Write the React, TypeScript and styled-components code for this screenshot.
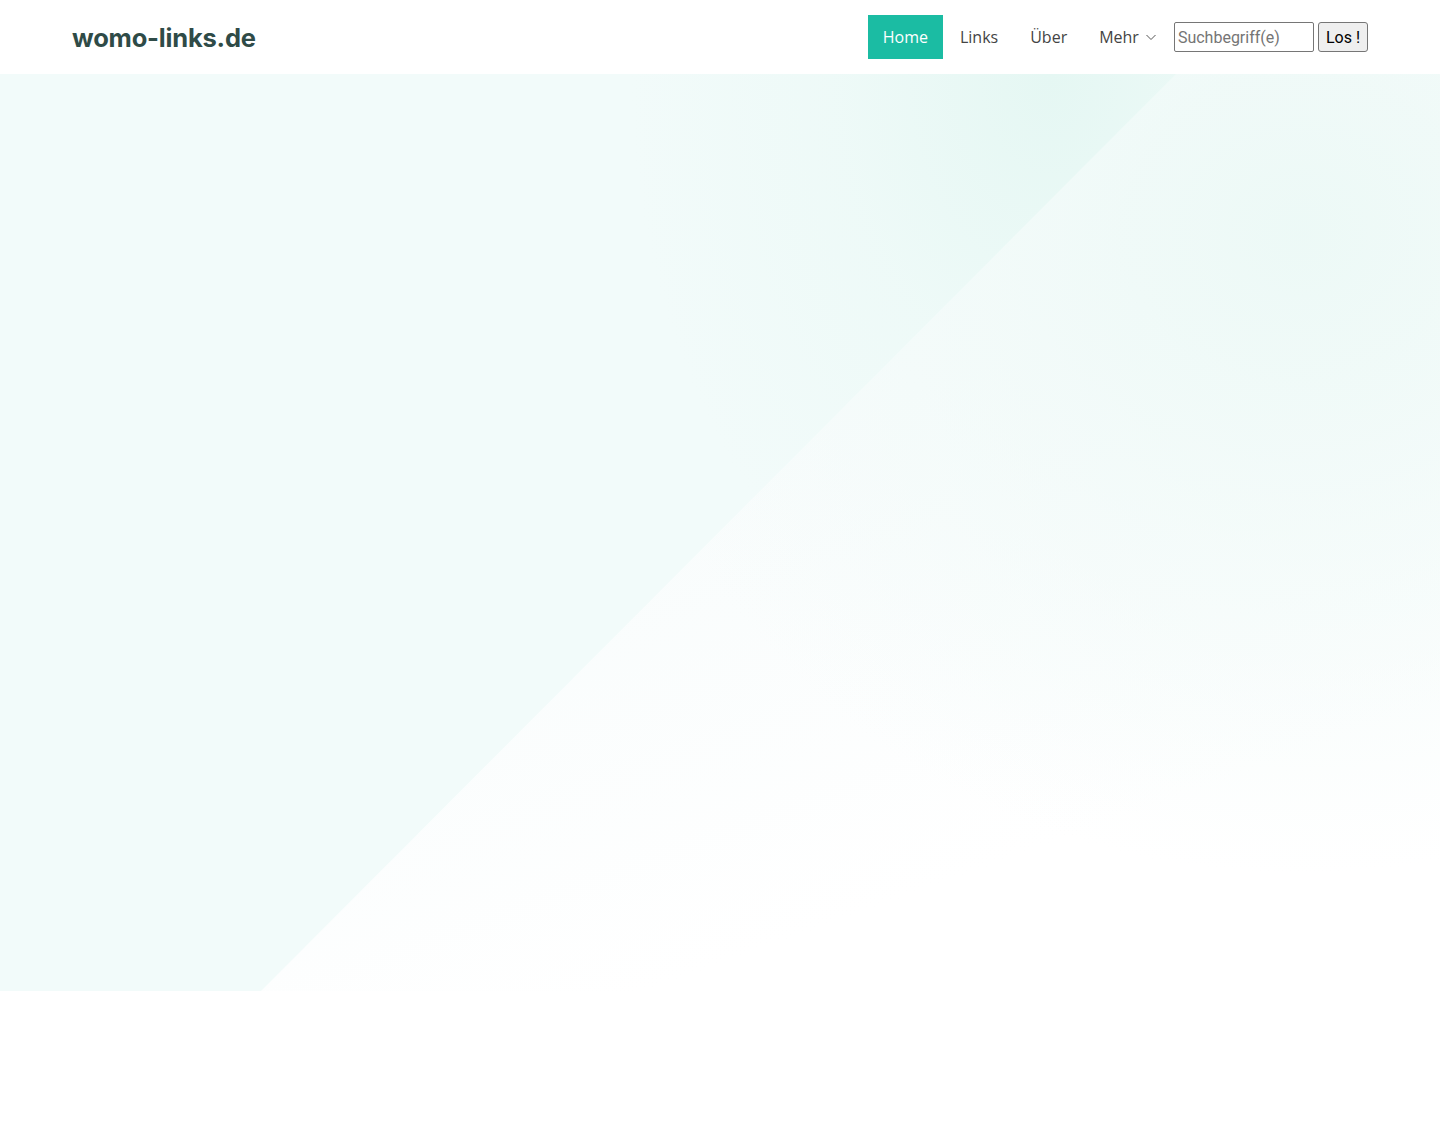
import React from "react";
import styled, { createGlobalStyle } from "styled-components";

const GlobalStyle = createGlobalStyle`
  html, body {
    margin: 0;
    padding: 0;
    background: #ffffff;
    font-family: "Open Sans", "Liberation Sans", sans-serif;
  }
  * { box-sizing: border-box; }
`;

const Page = styled.div`
  min-height: 1123px;
  background: #ffffff;
`;

const Header = styled.header`
  height: 74px;
  display: flex;
  align-items: center;
  justify-content: space-between;
  padding: 0 72px;
  background: #ffffff;
`;

const Logo = styled.a`
  font-family: Inter, "Liberation Sans", sans-serif;
  font-size: 25.5px;
  font-weight: 700;
  color: #2f4b47;
  text-decoration: none;
  letter-spacing: -0.2px;
`;

const Nav = styled.nav`
  display: flex;
  align-items: center;
  gap: 2px;
`;

const NavItem = styled.a<{ $active?: boolean }>`
  display: flex;
  align-items: center;
  gap: 6px;
  height: 44px;
  padding: 0 15px;
  font-size: 16px;
  color: ${(p) => (p.$active ? "#ffffff" : "#444444")};
  background: ${(p) => (p.$active ? "#1bbca3" : "transparent")};
  text-decoration: none;
  cursor: pointer;
`;

const Search = styled.form`
  display: flex;
  align-items: center;
  gap: 4px;
`;

const SearchInput = styled.input`
  width: 140px;
  height: 30px;
  padding: 1px 3px;
  font-family: Roboto, "Liberation Sans", sans-serif;
  font-size: 16px;
  border: 1px solid #767676;
  border-radius: 2px;
  color: #222;
  &::placeholder { color: #757575; }
`;

const SearchButton = styled.button`
  height: 30px;
  padding: 0 7px;
  font-family: Roboto, "Liberation Sans", sans-serif;
  font-size: 16px;
  color: #000;
  background: #efefef;
  border: 1px solid #767676;
  border-radius: 3px;
`;

const Hero = styled.section`
  position: relative;
  height: 917px;
  overflow: hidden;
  background:
    radial-gradient(ellipse 700px 640px at 1300px 160px, rgba(236, 249, 246, 0.95) 0%, rgba(240, 250, 248, 0.75) 40%, rgba(255, 255, 255, 0) 100%),
    linear-gradient(160deg, #f4fbfb 0%, #f8fcfc 45%, #ffffff 80%);

  &::before {
    content: "";
    position: absolute;
    inset: 0;
    clip-path: polygon(0 0, 1176px 0, 261px 100%, 0 100%);
    background:
      radial-gradient(ellipse 420px 600px at 1050px 0px, #e5f7f3 0%, rgba(235, 249, 246, 0.6) 50%, rgba(242, 251, 250, 0) 100%),
      #f2fbfa;
  }
`;

const Chevron = () => (
  <svg width="12" height="12" viewBox="0 0 12 12" fill="none">
    <path d="M1.5 4l4.5 4.5L10.5 4" stroke="#555" strokeWidth="1" />
  </svg>
);

export default function App() {
  return (
    <Page>
      <GlobalStyle />
      <Header>
        <Logo href="#">womo-links.de</Logo>
        <Nav>
          <NavItem $active>Home</NavItem>
          <NavItem>Links</NavItem>
          <NavItem>Über</NavItem>
          <NavItem>
            Mehr <Chevron />
          </NavItem>
          <Search onSubmit={(e) => e.preventDefault()}>
            <SearchInput placeholder="Suchbegriff(e)" />
            <SearchButton type="submit">Los !</SearchButton>
          </Search>
        </Nav>
      </Header>
      <Hero />
    </Page>
  );
}
